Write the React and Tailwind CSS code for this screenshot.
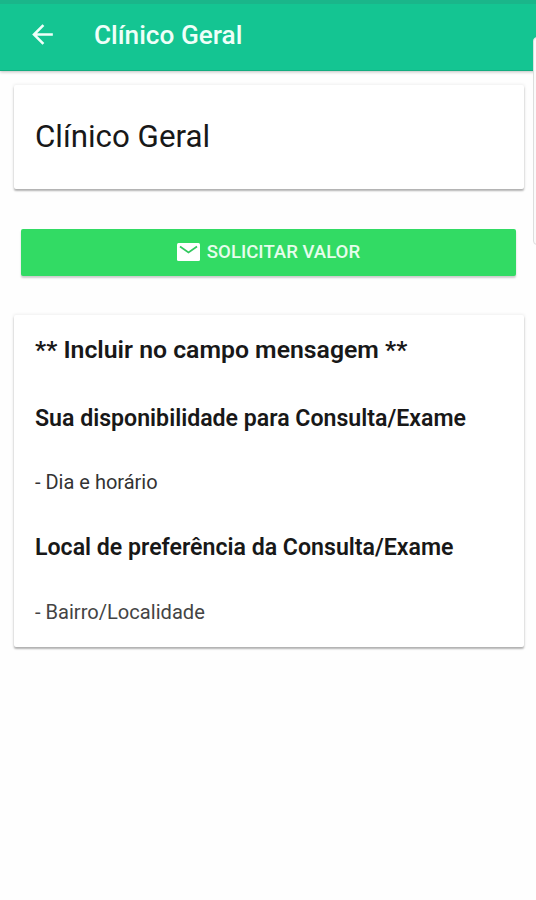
const card =
  "rounded-[2px] bg-white shadow-[0_2px_2px_0_rgba(0,0,0,0.28),0_0_3px_1px_rgba(0,0,0,0.06)]";

export default function App() {
  return (
    <div className="relative h-[900px] w-[536px] overflow-hidden bg-[#fefefe] font-['Roboto',sans-serif] text-[#181818]">
      <header className="flex h-[71px] items-start border-b border-t-4 border-b-[#13ad80] border-t-[#1ab68a] bg-[#14c592] pl-[27px] pt-[15px] text-[#effff9] shadow-[0_1px_3px_rgba(0,0,0,0.25)]">
        <svg className="h-[31px] w-[31px]" viewBox="0 0 24 24" fill="currentColor">
          <path d="M20 11H7.83l5.59-5.59L12 4l-8 8 8 8 1.41-1.41L7.83 13H20v-2z" />
        </svg>
        <h1 className="ml-[36px] mt-[2px] whitespace-nowrap text-[26.2px] font-medium leading-[28px]">Clínico Geral</h1>
      </header>
      <main>
        <section className={`${card} ml-[14px] mt-[14px] flex h-[104px] w-[510px] items-center pl-[21px]`}>
          <h2 className="whitespace-nowrap text-[31.3px] leading-[36px]">Clínico Geral</h2>
        </section>
        <button className="ml-[21px] mt-[40px] flex h-[47px] w-[495px] items-center justify-center gap-[7px] rounded-[2px] bg-[#32db64] text-[18.6px] font-medium text-[#e6fdec] shadow-[0_2px_2px_rgba(0,0,0,0.2)]">
          <svg className="mb-px h-[18px] w-[23px]" viewBox="0 0 23 18" fill="none">
            <rect width="23" height="18" rx="1.5" fill="#fff" />
            <path d="m3 3.5 8.5 6 8.5-6" stroke="#32c95f" strokeWidth="1.7" />
          </svg>
          <span>SOLICITAR VALOR</span>
        </button>
        <section className={`${card} ml-[14px] mt-[39px] h-[332px] w-[510px] whitespace-nowrap pl-[21px] pt-[20px]`}>
          <h2 className="text-[24.8px] font-semibold leading-[30px]">** Incluir no campo mensagem **</h2>
          <h3 className="mt-[40px] text-[23.13px] font-semibold leading-[28px]">Sua disponibilidade para Consulta/Exame</h3>
          <p className="mt-[36px] text-[20px] leading-[26px] text-[#333]">- Dia e horário</p>
          <h3 className="mt-[39px] text-[23.13px] font-semibold leading-[28px]">Local de preferência da Consulta/Exame</h3>
          <p className="mt-[37px] text-[20.1px] leading-[26px] text-[#444]">- Bairro/Localidade</p>
        </section>
      </main>
      <div className="absolute left-[533px] top-[37px] h-[208px] w-[8px] rounded-[4px] border border-[#ddd] bg-[#fafafa]" />
    </div>
  );
}
